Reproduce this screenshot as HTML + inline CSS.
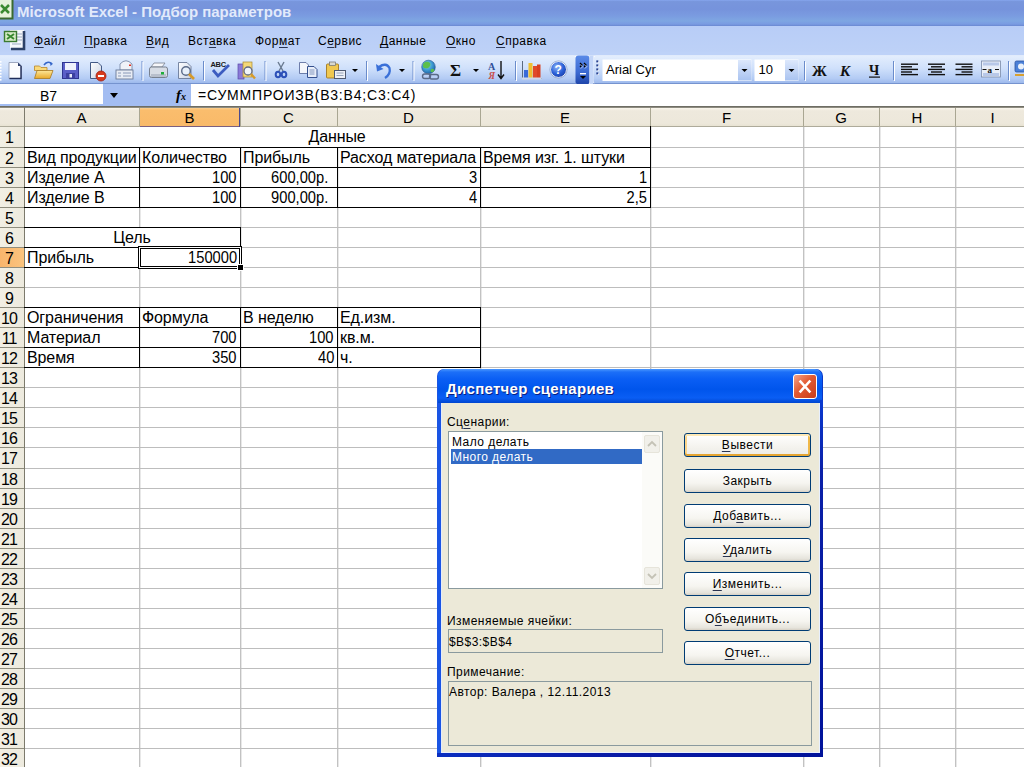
<!DOCTYPE html><html><head><meta charset="utf-8"><style>
*{margin:0;padding:0;box-sizing:border-box}
html,body{width:1024px;height:767px;overflow:hidden;background:#fff;font-family:"Liberation Sans",sans-serif;position:relative}
.a{position:absolute}
.t{position:absolute;white-space:nowrap;line-height:1}
u{text-decoration:underline;text-decoration-thickness:1px;text-underline-offset:2px;text-decoration-color:#2a3350}
</style></head><body>

<div class="a" style="left:0;top:0;width:1024px;height:26px;background:linear-gradient(#86a6ee 0%,#7896dc 6%,#7693dc 35%,#7a9be0 60%,#7ea6e2 80%,#7a9ce2 92%,#6d8cd6 100%)"></div>
<div class="a" style="left:0;top:25px;width:1024px;height:1px;background:#6e8dd5"></div>
<div class="t" style="left:17px;top:4px;font-size:15px;font-weight:bold;color:#e2eafb;letter-spacing:0px">Microsoft Excel - Подбор параметров</div>
<svg class="a" style="left:0;top:0" width="14" height="20"><rect x="-2" y="-2" width="14.5" height="20.5" fill="#e6f2da" stroke="#3a6a30" stroke-width="2"/><path d="M1 5 L9 13 M9 5 L1 13" stroke="#3a8a30" stroke-width="2.5"/></svg>
<div class="a" style="left:0;top:26px;width:1024px;height:26px;background:linear-gradient(#b8cdf7,#bdd1f7)"></div>
<div class="t" style="left:34px;top:35px;font-size:12px;color:#000;letter-spacing:0.5px"><u>Ф</u>айл</div>
<div class="t" style="left:84px;top:35px;font-size:12px;color:#000;letter-spacing:0.5px"><u>П</u>равка</div>
<div class="t" style="left:146px;top:35px;font-size:12px;color:#000;letter-spacing:0.5px"><u>В</u>ид</div>
<div class="t" style="left:188px;top:35px;font-size:12px;color:#000;letter-spacing:0.5px">Вст<u>а</u>вка</div>
<div class="t" style="left:255px;top:35px;font-size:12px;color:#000;letter-spacing:0.5px">Фор<u>м</u>ат</div>
<div class="t" style="left:318px;top:35px;font-size:12px;color:#000;letter-spacing:0.5px">С<u>е</u>рвис</div>
<div class="t" style="left:380px;top:35px;font-size:12px;color:#000;letter-spacing:0.5px"><u>Д</u>анные</div>
<div class="t" style="left:446px;top:35px;font-size:12px;color:#000;letter-spacing:0.5px"><u>О</u>кно</div>
<div class="t" style="left:496px;top:35px;font-size:12px;color:#000;letter-spacing:0.5px"><u>С</u>правка</div>
<svg class="a" style="left:3px;top:28px" width="24" height="24"><rect x="7" y="2" width="14" height="18" fill="#f6f8fc"/><path d="M21 3 V21 H8" stroke="#2d4168" stroke-width="2.6" fill="none"/><path d="M14 6 h5 M14 9 h5 M14 12 h5 M9 16 h9" stroke="#9aa8c0" stroke-width="1"/><rect x="1.5" y="3.5" width="12" height="10" fill="#d8ecc8" stroke="#3a7a30" stroke-width="1.4"/><path d="M4 6 L11 11 M11 6 L4 11" stroke="#3a8a30" stroke-width="2"/></svg>
<svg class="a" style="left:0;top:52px" width="1024" height="36" viewBox="0 52 1024 36">
<defs>
<linearGradient id="tb" x1="0" y1="0" x2="0" y2="1"><stop offset="0" stop-color="#e4eefd"/><stop offset="0.45" stop-color="#cfe0fb"/><stop offset="0.8" stop-color="#b3cbf4"/><stop offset="1" stop-color="#97b4ea"/></linearGradient>
<linearGradient id="chev" x1="0" y1="0" x2="0" y2="1"><stop offset="0" stop-color="#5a8ae8"/><stop offset="0.6" stop-color="#3a68d0"/><stop offset="1" stop-color="#1e44a8"/></linearGradient>
<linearGradient id="fold" x1="0" y1="0" x2="0" y2="1"><stop offset="0" stop-color="#fde79a"/><stop offset="1" stop-color="#e8a92a"/></linearGradient>
<linearGradient id="paper" x1="0" y1="0" x2="1" y2="1"><stop offset="0" stop-color="#ffffff"/><stop offset="1" stop-color="#c9d2e4"/></linearGradient>
<linearGradient id="combo" x1="0" y1="0" x2="0" y2="1"><stop offset="0" stop-color="#dde8fc"/><stop offset="1" stop-color="#a9c3f0"/></linearGradient>
<radialGradient id="help" cx="0.4" cy="0.35" r="0.7"><stop offset="0" stop-color="#8fb4f8"/><stop offset="0.6" stop-color="#2a5fd6"/><stop offset="1" stop-color="#1b3fa8"/></radialGradient>
<radialGradient id="globe" cx="0.4" cy="0.35" r="0.7"><stop offset="0" stop-color="#9fe0a0"/><stop offset="0.5" stop-color="#3f9fd8"/><stop offset="1" stop-color="#1f5fa0"/></radialGradient>
</defs>
<rect x="0" y="52" width="1024" height="3.5" fill="#bed2f8"/>
<rect x="0" y="84" width="1024" height="4" fill="#ffffff"/>
<path d="M0 55.5 H572 Q576 55.5 576 59 V84.3 H0 Z" fill="url(#tb)"/>
<rect x="575.5" y="55.5" width="14" height="29" rx="3" fill="url(#chev)"/>
<path d="M580 63 l2 2 -2 2 M584 63 l2 2 -2 2" stroke="#000" stroke-width="1.3" fill="none"/>
<path d="M580 63.8 l2 2 -2 2 M584 63.8 l2 2 -2 2" stroke="#fff" stroke-width="0.6" fill="none" transform="translate(0.8,0.8)"/>
<rect x="580" y="73" width="6" height="1.4" fill="#fff"/><path d="M580 76 h6 l-3 3 z" fill="#000"/>
<rect x="589.5" y="55.5" width="4" height="29" fill="#c4d6f8"/>
<path d="M597 55.5 H1024 V84.3 H597 Q593.5 84.3 593.5 80 V60 Q593.5 55.5 597 55.5 Z" fill="url(#tb)"/>
<rect x="0" y="83.3" width="576" height="1.2" fill="#6584c4"/><rect x="593" y="83.3" width="431" height="1.2" fill="#6584c4"/>
<rect x="0" y="61" width="1.5" height="1.6" fill="#fff"/>
<rect x="0" y="64" width="1.5" height="1.6" fill="#fff"/>
<rect x="0" y="67" width="1.5" height="1.6" fill="#fff"/>
<rect x="0" y="70" width="1.5" height="1.6" fill="#fff"/>
<rect x="0" y="73" width="1.5" height="1.6" fill="#fff"/>
<rect x="0" y="76" width="1.5" height="1.6" fill="#fff"/>
<rect x="0" y="79" width="1.5" height="1.6" fill="#fff"/>
<rect x="597" y="61" width="2" height="2" fill="#fff"/><rect x="596.3" y="60.4" width="2" height="2" fill="#27418f"/>
<rect x="597" y="65" width="2" height="2" fill="#fff"/><rect x="596.3" y="64.4" width="2" height="2" fill="#27418f"/>
<rect x="597" y="69" width="2" height="2" fill="#fff"/><rect x="596.3" y="68.4" width="2" height="2" fill="#27418f"/>
<rect x="597" y="73" width="2" height="2" fill="#fff"/><rect x="596.3" y="72.4" width="2" height="2" fill="#27418f"/>
<rect x="141.5" y="61" width="1" height="19" fill="#6a8ccb"/><rect x="142.5" y="62" width="1" height="19" fill="#ffffff"/>
<rect x="203" y="61" width="1" height="19" fill="#6a8ccb"/><rect x="204" y="62" width="1" height="19" fill="#ffffff"/>
<rect x="264.5" y="61" width="1" height="19" fill="#6a8ccb"/><rect x="265.5" y="62" width="1" height="19" fill="#ffffff"/>
<rect x="366" y="61" width="1" height="19" fill="#6a8ccb"/><rect x="367" y="62" width="1" height="19" fill="#ffffff"/>
<rect x="412.5" y="61" width="1" height="19" fill="#6a8ccb"/><rect x="413.5" y="62" width="1" height="19" fill="#ffffff"/>
<rect x="515" y="61" width="1" height="19" fill="#6a8ccb"/><rect x="516" y="62" width="1" height="19" fill="#ffffff"/>
<rect x="804" y="61" width="1" height="19" fill="#6a8ccb"/><rect x="805" y="62" width="1" height="19" fill="#ffffff"/>
<rect x="893" y="61" width="1" height="19" fill="#6a8ccb"/><rect x="894" y="62" width="1" height="19" fill="#ffffff"/>
<rect x="1008" y="61" width="1" height="19" fill="#6a8ccb"/><rect x="1009" y="62" width="1" height="19" fill="#ffffff"/>
<path d="M9 62.5 H18 L21.5 66 V78.5 H9 Z" fill="#fbfcfe" stroke="#8a96b0" stroke-width="0.8"/>
<path d="M21 66 V78.5 H9.5" stroke="#1e2c58" stroke-width="1.4" fill="none"/>
<path d="M18 62.5 L21.5 66 H18 Z" fill="#2a3a68"/>
<path d="M34.5 66 h5 l1.5 1.5 h6 v3 H34.5 z" fill="#f9d97a" stroke="#b7862a" stroke-width="0.8"/>
<path d="M34.5 78.5 L37 70.5 H53 L50 78.5 Z" fill="url(#fold)" stroke="#a8781e" stroke-width="0.8"/>
<path d="M44 65 Q47 60.5 51.5 63.5" stroke="#3566c8" stroke-width="1.6" fill="none"/><path d="M50 62 l3 1.8 -2.5 2.2z" fill="#3566c8"/>
<rect x="62.5" y="62.5" width="16" height="16" fill="#5a5fc8" stroke="#2e3590" stroke-width="1"/>
<rect x="65" y="63" width="11" height="7" fill="#eef1fb"/><rect x="66" y="73" width="9" height="5.5" fill="#3b40a0"/><rect x="69.5" y="74" width="2.5" height="3.5" fill="#e9ecf8"/>
<path d="M90.5 62.5 H98 L101.5 66 V78.5 H90.5 Z" fill="url(#paper)" stroke="#445a86" stroke-width="1"/>
<circle cx="101" cy="76" r="5" fill="#d83a1e" stroke="#a02010" stroke-width="0.8"/><rect x="98" y="75" width="6" height="2" fill="#fff"/>
<path d="M120 64 Q126 57.5 132 64 V70 H120 Z" fill="#f0f2f8" stroke="#7a8aa8" stroke-width="0.9"/>
<rect x="129" y="64.5" width="2" height="1.5" fill="#e03020"/>
<rect x="116" y="70" width="17" height="9" fill="#e8ecf4" stroke="#6a7a98" stroke-width="0.9"/>
<path d="M118 73 h3 M118 76 h3 M123 73 h8 M123 76 h8" stroke="#8090b0" stroke-width="0.9"/>
<path d="M151 67 L154 63 H165 L162 67 Z" fill="#f6f7fb" stroke="#7a8290" stroke-width="0.8"/>
<rect x="149.5" y="67" width="18" height="10.5" rx="2" fill="#d8dde6" stroke="#6e7684" stroke-width="0.9"/>
<rect x="151" y="74" width="15" height="3" fill="#b8bfcc"/><rect x="161" y="72" width="3" height="2.5" fill="#1fae3a"/>
<path d="M178.5 62.5 H187 L191 66.5 V78.5 H178.5 Z" fill="url(#paper)" stroke="#6b7a98" stroke-width="0.9"/>
<circle cx="186" cy="71" r="4.3" fill="#e8f0fb" stroke="#5a6a88" stroke-width="1.4"/>
<path d="M189 74 L194 79" stroke="#d69a2a" stroke-width="2.6"/>
<text x="210.5" y="66.5" font-family="Liberation Sans" font-weight="bold" font-size="7.5" fill="#1a1a1a" letter-spacing="-0.3">ABC</text>
<path d="M213 70 L218 76 L229 65" stroke="#3c5cc0" stroke-width="2.8" fill="none"/>
<rect x="238" y="64" width="6" height="15" fill="#8a7ad8" stroke="#5a4aa8" stroke-width="0.7"/>
<rect x="243" y="62" width="9" height="15" fill="#f4d878" stroke="#a88a30" stroke-width="0.7"/>
<circle cx="248" cy="71" r="4" fill="#f0f4fb" stroke="#606a80" stroke-width="1.3"/><path d="M251 74 L255 78.5" stroke="#d69a2a" stroke-width="2.4"/>
<path d="M278 62 L283 71 M284 62 L279 71" stroke="#6a7a90" stroke-width="1.4"/>
<ellipse cx="278" cy="74.5" rx="2.3" ry="2.8" fill="none" stroke="#2c50b8" stroke-width="2"/><ellipse cx="284" cy="74.5" rx="2.3" ry="2.8" fill="none" stroke="#2c50b8" stroke-width="2"/>
<path d="M299.5 62.5 H306 L308.5 65 V73.5 H299.5 Z" fill="#f4f6fb" stroke="#6070a0" stroke-width="0.9"/>
<path d="M307.5 66.5 H314 L317 69.5 V77.5 H307.5 Z" fill="#e8eef9" stroke="#34508e" stroke-width="1"/>
<path d="M309.5 70 h5 M309.5 72 h5 M309.5 74 h5" stroke="#6a80b0" stroke-width="0.8"/>
<rect x="326.5" y="64" width="12" height="14" rx="1" fill="#f0c850" stroke="#a07820" stroke-width="0.9"/>
<rect x="329.5" y="62" width="6" height="3.5" fill="#d8d8d0" stroke="#707070" stroke-width="0.7"/>
<rect x="334.5" y="70.5" width="11" height="8" fill="#eef0f6" stroke="#505a70" stroke-width="1"/>
<path d="M336.5 73 h7 M336.5 75.5 h7" stroke="#8090a8" stroke-width="0.8"/>
<path d="M352 69 h6 l-3 3 z" fill="#000"/>
<path d="M399 69 h6 l-3 3 z" fill="#000"/>
<path d="M473 69 h6 l-3 3 z" fill="#000"/>
<path d="M379 67 Q386 62 389.5 68 Q391 74 385 78" stroke="#3a70d8" stroke-width="2.3" fill="none"/>
<path d="M376 64 L377 71.5 L383.5 69 Z" fill="#3a70d8"/>
<circle cx="428.5" cy="67" r="6.8" fill="url(#globe)" stroke="#2a5a90" stroke-width="0.6"/>
<path d="M423 64 q3 -4 7 -1 q1 3 -2 5 q-3 1 -5 -1z M431 69 q3 -1 3.5 1.5 q-2 3 -4 1z" fill="#5cbf4a"/>
<rect x="422.5" y="74" width="8" height="4.5" rx="2.2" fill="none" stroke="#5a6a88" stroke-width="1.4"/><rect x="429.5" y="74.5" width="9" height="4.5" rx="2.2" fill="none" stroke="#5a6a88" stroke-width="1.4"/>
<text x="450" y="75.5" font-family="Liberation Serif" font-weight="bold" font-size="17" fill="#111">Σ</text>
<text x="488" y="69.5" font-family="Liberation Serif" font-weight="bold" font-size="10" fill="#2f4f98">A</text>
<text x="488.5" y="79" font-family="Liberation Serif" font-weight="bold" font-style="italic" font-size="9.5" fill="#c85050">Я</text>
<path d="M501 61 V78 M498 74.5 L501 78.5 L504 74.5" stroke="#111" stroke-width="1.4" fill="none"/>
<path d="M522.5 61 V78.5 H541.5" stroke="#5a6a80" stroke-width="1" fill="none"/>
<rect x="524" y="70" width="4" height="8" fill="#3a6ad8"/><rect x="528.5" y="63" width="4" height="15" fill="#f0c030"/><rect x="533" y="66" width="4" height="12" fill="#e04a2a"/><rect x="537" y="64.5" width="3.5" height="13.5" fill="#d84020"/>
<rect x="522" y="77.5" width="19.5" height="2" fill="#d0d8e8"/>
<circle cx="558.5" cy="69.5" r="8" fill="url(#help)" stroke="#fff" stroke-width="1"/><circle cx="558.5" cy="69.5" r="8.6" fill="none" stroke="#6a80b0" stroke-width="0.5"/>
<text x="554.5" y="74" font-family="Liberation Sans" font-weight="bold" font-size="12" fill="#fff">?</text>
<rect x="602.5" y="59.5" width="149" height="21.5" fill="#fff"/>
<rect x="738" y="60" width="13.5" height="20.5" fill="url(#combo)"/>
<path d="M741.5 69 h6 l-3 3 z" fill="#000"/>
<rect x="754.5" y="59.5" width="44" height="21.5" fill="#fff"/>
<rect x="785" y="60" width="13.5" height="20.5" fill="url(#combo)"/>
<path d="M788.5 69 h6 l-3 3 z" fill="#000"/>
<text x="606" y="73.5" font-family="Liberation Sans" font-size="13" fill="#000">Arial Cyr</text>
<text x="758.5" y="73.5" font-family="Liberation Sans" font-size="13" fill="#000">10</text>
<text x="812" y="75.5" font-family="Liberation Serif" font-weight="bold" font-size="15" fill="#111">Ж</text>
<text x="840" y="75.5" font-family="Liberation Serif" font-weight="bold" font-style="italic" font-size="15" fill="#111">К</text>
<text x="869" y="75" font-family="Liberation Serif" font-weight="bold" font-size="14" fill="#111">Ч</text>
<rect x="869" y="76.5" width="11" height="1.2" fill="#111"/>
<rect x="901" y="63.5" width="17" height="1.4" fill="#111"/>
<rect x="901" y="66.1" width="11" height="1.4" fill="#111"/>
<rect x="901" y="68.7" width="17" height="1.4" fill="#111"/>
<rect x="901" y="71.3" width="11" height="1.4" fill="#111"/>
<rect x="901" y="73.9" width="17" height="1.4" fill="#111"/>
<rect x="928" y="63.5" width="17" height="1.4" fill="#111"/>
<rect x="931" y="66.1" width="11" height="1.4" fill="#111"/>
<rect x="928" y="68.7" width="17" height="1.4" fill="#111"/>
<rect x="931" y="71.3" width="11" height="1.4" fill="#111"/>
<rect x="928" y="73.9" width="17" height="1.4" fill="#111"/>
<rect x="955.5" y="63.5" width="17" height="1.4" fill="#111"/>
<rect x="961.5" y="66.1" width="11" height="1.4" fill="#111"/>
<rect x="955.5" y="68.7" width="17" height="1.4" fill="#111"/>
<rect x="961.5" y="71.3" width="11" height="1.4" fill="#111"/>
<rect x="955.5" y="73.9" width="17" height="1.4" fill="#111"/>
<rect x="981.5" y="61" width="19" height="16" fill="#e8eef8" stroke="#7a8aa8" stroke-width="0.8"/>
<rect x="983" y="62.5" width="16" height="3" fill="#b8c8e8"/><rect x="983" y="73" width="16" height="3" fill="#b8c8e8"/>
<text x="987.5" y="72.5" font-family="Liberation Serif" font-weight="bold" font-size="9" fill="#111">a</text>
<path d="M982.5 69.5 h4 M995 69.5 h4" stroke="#111" stroke-width="1"/>
<rect x="1015" y="61" width="10" height="11" rx="1.5" fill="#4a80d8" stroke="#2a50a0" stroke-width="0.8"/><circle cx="1021" cy="66.5" r="3" fill="#e8f0fb"/>
<path d="M1015 75 h10" stroke="#d8a030" stroke-width="2"/>
</svg>
<div class="a" style="left:0;top:84px;width:1024px;height:22px;background:#a3bdf2"></div>
<div class="a" style="left:0;top:84px;width:103px;height:20px;background:#fff"></div>
<div class="a" style="left:191px;top:84px;width:833px;height:22px;background:#fff"></div>
<div class="t" style="left:40px;top:89px;font-size:14px;color:#000">B7</div>
<div class="a" style="left:110px;top:93px;width:0;height:0;border-left:4.5px solid transparent;border-right:4.5px solid transparent;border-top:5px solid #000"></div>
<div class="t" style="left:176px;top:88px;font-size:15px;font-style:italic;font-weight:bold;font-family:'Liberation Serif',serif;color:#000">f<span style="font-size:10px">x</span></div>
<div class="t" style="left:198px;top:88px;font-size:14px;color:#000;letter-spacing:0.8px">=СУММПРОИЗВ(B3:B4;C3:C4)</div>
<div class="a" style="left:0;top:106px;width:1024px;height:1px;background:#6e6d64"></div>
<div class="a" style="left:0;top:107px;width:1024px;height:1px;background:#8e8c80"></div>
<div class="a" style="left:0;top:108px;width:1024px;height:19px;background:linear-gradient(#faf6ec 0%,#eee9dd 15%,#ede8db 80%,#e6e1d0 100%)"></div>
<div class="a" style="left:140px;top:108px;width:100px;height:19px;background:linear-gradient(#fdd08f 0%,#fabd6d 12%,#f9ba69 92%,#f5b060 100%)"></div>
<div class="a" style="left:0;top:126px;width:1024px;height:1px;background:#aeab9b"></div>
<div class="a" style="left:140px;top:126px;width:100px;height:1px;background:#7b6080"></div>
<div class="a" style="left:239px;top:108px;width:1px;height:19px;background:#4a4a90"></div>
<div class="a" style="left:139px;top:108px;width:1px;height:18px;background:#a9a692"></div>
<div class="t" style="left:61.5px;width:40px;text-align:center;top:110px;font-size:15px;color:#000">A</div>
<div class="a" style="left:240px;top:108px;width:1px;height:18px;background:#a9a692"></div>
<div class="t" style="left:169.5px;width:40px;text-align:center;top:110px;font-size:15px;color:#000">B</div>
<div class="a" style="left:337px;top:108px;width:1px;height:18px;background:#a9a692"></div>
<div class="t" style="left:268.5px;width:40px;text-align:center;top:110px;font-size:15px;color:#000">C</div>
<div class="a" style="left:480px;top:108px;width:1px;height:18px;background:#a9a692"></div>
<div class="t" style="left:388.5px;width:40px;text-align:center;top:110px;font-size:15px;color:#000">D</div>
<div class="a" style="left:650px;top:108px;width:1px;height:18px;background:#a9a692"></div>
<div class="t" style="left:545.0px;width:40px;text-align:center;top:110px;font-size:15px;color:#000">E</div>
<div class="a" style="left:803px;top:108px;width:1px;height:18px;background:#a9a692"></div>
<div class="t" style="left:706.5px;width:40px;text-align:center;top:110px;font-size:15px;color:#000">F</div>
<div class="a" style="left:879px;top:108px;width:1px;height:18px;background:#a9a692"></div>
<div class="t" style="left:821.0px;width:40px;text-align:center;top:110px;font-size:15px;color:#000">G</div>
<div class="a" style="left:955px;top:108px;width:1px;height:18px;background:#a9a692"></div>
<div class="t" style="left:897.0px;width:40px;text-align:center;top:110px;font-size:15px;color:#000">H</div>
<div class="a" style="left:1030px;top:108px;width:1px;height:18px;background:#a9a692"></div>
<div class="t" style="left:972.5px;width:40px;text-align:center;top:110px;font-size:15px;color:#000">I</div>
<div class="a" style="left:0;top:127px;width:24px;height:640px;background:linear-gradient(90deg,#f2efe4,#edeade)"></div>
<div class="a" style="left:24px;top:107px;width:1px;height:660px;background:#7c7a6c"></div>
<div class="a" style="left:0;top:147px;width:24px;height:1px;background:#8f8d7e"></div>
<div class="t" style="left:-1px;width:20px;text-align:center;top:130px;font-size:16px;letter-spacing:-1px;color:#000">1</div>
<div class="a" style="left:0;top:167px;width:24px;height:1px;background:#8f8d7e"></div>
<div class="t" style="left:-1px;width:20px;text-align:center;top:151px;font-size:16px;letter-spacing:-1px;color:#000">2</div>
<div class="a" style="left:0;top:187px;width:24px;height:1px;background:#8f8d7e"></div>
<div class="t" style="left:-1px;width:20px;text-align:center;top:171px;font-size:16px;letter-spacing:-1px;color:#000">3</div>
<div class="a" style="left:0;top:207px;width:24px;height:1px;background:#8f8d7e"></div>
<div class="t" style="left:-1px;width:20px;text-align:center;top:191px;font-size:16px;letter-spacing:-1px;color:#000">4</div>
<div class="a" style="left:0;top:227px;width:24px;height:1px;background:#8f8d7e"></div>
<div class="t" style="left:-1px;width:20px;text-align:center;top:211px;font-size:16px;letter-spacing:-1px;color:#000">5</div>
<div class="a" style="left:0;top:247px;width:24px;height:1px;background:#8f8d7e"></div>
<div class="t" style="left:-1px;width:20px;text-align:center;top:231px;font-size:16px;letter-spacing:-1px;color:#000">6</div>
<div class="a" style="left:0;top:248px;width:24px;height:19px;background:linear-gradient(90deg,#f9b56c,#fbc47e)"></div>
<div class="a" style="left:0;top:267px;width:24px;height:1px;background:#8f8d7e"></div>
<div class="t" style="left:-1px;width:20px;text-align:center;top:251px;font-size:16px;letter-spacing:-1px;color:#000">7</div>
<div class="a" style="left:0;top:287px;width:24px;height:1px;background:#8f8d7e"></div>
<div class="t" style="left:-1px;width:20px;text-align:center;top:271px;font-size:16px;letter-spacing:-1px;color:#000">8</div>
<div class="a" style="left:0;top:307px;width:24px;height:1px;background:#8f8d7e"></div>
<div class="t" style="left:-1px;width:20px;text-align:center;top:291px;font-size:16px;letter-spacing:-1px;color:#000">9</div>
<div class="a" style="left:0;top:327px;width:24px;height:1px;background:#8f8d7e"></div>
<div class="t" style="left:-1px;width:20px;text-align:center;top:311px;font-size:16px;letter-spacing:-1px;color:#000">10</div>
<div class="a" style="left:0;top:347px;width:24px;height:1px;background:#8f8d7e"></div>
<div class="t" style="left:-1px;width:20px;text-align:center;top:331px;font-size:16px;letter-spacing:-1px;color:#000">11</div>
<div class="a" style="left:0;top:367px;width:24px;height:1px;background:#8f8d7e"></div>
<div class="t" style="left:-1px;width:20px;text-align:center;top:351px;font-size:16px;letter-spacing:-1px;color:#000">12</div>
<div class="a" style="left:0;top:387px;width:24px;height:1px;background:#8f8d7e"></div>
<div class="t" style="left:-1px;width:20px;text-align:center;top:371px;font-size:16px;letter-spacing:-1px;color:#000">13</div>
<div class="a" style="left:0;top:407px;width:24px;height:1px;background:#8f8d7e"></div>
<div class="t" style="left:-1px;width:20px;text-align:center;top:391px;font-size:16px;letter-spacing:-1px;color:#000">14</div>
<div class="a" style="left:0;top:427px;width:24px;height:1px;background:#8f8d7e"></div>
<div class="t" style="left:-1px;width:20px;text-align:center;top:411px;font-size:16px;letter-spacing:-1px;color:#000">15</div>
<div class="a" style="left:0;top:447px;width:24px;height:1px;background:#8f8d7e"></div>
<div class="t" style="left:-1px;width:20px;text-align:center;top:431px;font-size:16px;letter-spacing:-1px;color:#000">16</div>
<div class="a" style="left:0;top:468px;width:24px;height:1px;background:#8f8d7e"></div>
<div class="t" style="left:-1px;width:20px;text-align:center;top:451px;font-size:16px;letter-spacing:-1px;color:#000">17</div>
<div class="a" style="left:0;top:488px;width:24px;height:1px;background:#8f8d7e"></div>
<div class="t" style="left:-1px;width:20px;text-align:center;top:472px;font-size:16px;letter-spacing:-1px;color:#000">18</div>
<div class="a" style="left:0;top:508px;width:24px;height:1px;background:#8f8d7e"></div>
<div class="t" style="left:-1px;width:20px;text-align:center;top:492px;font-size:16px;letter-spacing:-1px;color:#000">19</div>
<div class="a" style="left:0;top:528px;width:24px;height:1px;background:#8f8d7e"></div>
<div class="t" style="left:-1px;width:20px;text-align:center;top:512px;font-size:16px;letter-spacing:-1px;color:#000">20</div>
<div class="a" style="left:0;top:548px;width:24px;height:1px;background:#8f8d7e"></div>
<div class="t" style="left:-1px;width:20px;text-align:center;top:532px;font-size:16px;letter-spacing:-1px;color:#000">21</div>
<div class="a" style="left:0;top:568px;width:24px;height:1px;background:#8f8d7e"></div>
<div class="t" style="left:-1px;width:20px;text-align:center;top:552px;font-size:16px;letter-spacing:-1px;color:#000">22</div>
<div class="a" style="left:0;top:588px;width:24px;height:1px;background:#8f8d7e"></div>
<div class="t" style="left:-1px;width:20px;text-align:center;top:572px;font-size:16px;letter-spacing:-1px;color:#000">23</div>
<div class="a" style="left:0;top:608px;width:24px;height:1px;background:#8f8d7e"></div>
<div class="t" style="left:-1px;width:20px;text-align:center;top:592px;font-size:16px;letter-spacing:-1px;color:#000">24</div>
<div class="a" style="left:0;top:628px;width:24px;height:1px;background:#8f8d7e"></div>
<div class="t" style="left:-1px;width:20px;text-align:center;top:612px;font-size:16px;letter-spacing:-1px;color:#000">25</div>
<div class="a" style="left:0;top:648px;width:24px;height:1px;background:#8f8d7e"></div>
<div class="t" style="left:-1px;width:20px;text-align:center;top:632px;font-size:16px;letter-spacing:-1px;color:#000">26</div>
<div class="a" style="left:0;top:668px;width:24px;height:1px;background:#8f8d7e"></div>
<div class="t" style="left:-1px;width:20px;text-align:center;top:652px;font-size:16px;letter-spacing:-1px;color:#000">27</div>
<div class="a" style="left:0;top:688px;width:24px;height:1px;background:#8f8d7e"></div>
<div class="t" style="left:-1px;width:20px;text-align:center;top:672px;font-size:16px;letter-spacing:-1px;color:#000">28</div>
<div class="a" style="left:0;top:708px;width:24px;height:1px;background:#8f8d7e"></div>
<div class="t" style="left:-1px;width:20px;text-align:center;top:692px;font-size:16px;letter-spacing:-1px;color:#000">29</div>
<div class="a" style="left:0;top:728px;width:24px;height:1px;background:#8f8d7e"></div>
<div class="t" style="left:-1px;width:20px;text-align:center;top:712px;font-size:16px;letter-spacing:-1px;color:#000">30</div>
<div class="a" style="left:0;top:748px;width:24px;height:1px;background:#8f8d7e"></div>
<div class="t" style="left:-1px;width:20px;text-align:center;top:732px;font-size:16px;letter-spacing:-1px;color:#000">31</div>
<div class="a" style="left:0;top:768px;width:24px;height:1px;background:#8f8d7e"></div>
<div class="t" style="left:-1px;width:20px;text-align:center;top:752px;font-size:16px;letter-spacing:-1px;color:#000">32</div>
<div class="a" style="left:0;top:788px;width:24px;height:1px;background:#8f8d7e"></div>
<div class="t" style="left:-1px;width:20px;text-align:center;top:772px;font-size:16px;letter-spacing:-1px;color:#000">33</div>
<div class="a" style="left:139px;top:127px;width:1px;height:640px;background:#c2c2c2"></div>
<div class="a" style="left:140px;top:127px;width:1px;height:640px;background:#e8e8e8"></div>
<div class="a" style="left:240px;top:127px;width:1px;height:640px;background:#c2c2c2"></div>
<div class="a" style="left:241px;top:127px;width:1px;height:640px;background:#e8e8e8"></div>
<div class="a" style="left:337px;top:127px;width:1px;height:640px;background:#c2c2c2"></div>
<div class="a" style="left:338px;top:127px;width:1px;height:640px;background:#e8e8e8"></div>
<div class="a" style="left:480px;top:127px;width:1px;height:640px;background:#c2c2c2"></div>
<div class="a" style="left:481px;top:127px;width:1px;height:640px;background:#e8e8e8"></div>
<div class="a" style="left:650px;top:127px;width:1px;height:640px;background:#c2c2c2"></div>
<div class="a" style="left:651px;top:127px;width:1px;height:640px;background:#e8e8e8"></div>
<div class="a" style="left:803px;top:127px;width:1px;height:640px;background:#c2c2c2"></div>
<div class="a" style="left:804px;top:127px;width:1px;height:640px;background:#e8e8e8"></div>
<div class="a" style="left:879px;top:127px;width:1px;height:640px;background:#c2c2c2"></div>
<div class="a" style="left:880px;top:127px;width:1px;height:640px;background:#e8e8e8"></div>
<div class="a" style="left:955px;top:127px;width:1px;height:640px;background:#c2c2c2"></div>
<div class="a" style="left:956px;top:127px;width:1px;height:640px;background:#e8e8e8"></div>
<div class="a" style="left:25px;top:147px;width:999px;height:1px;background:#bdbdbd"></div>
<div class="a" style="left:25px;top:167px;width:999px;height:1px;background:#bdbdbd"></div>
<div class="a" style="left:25px;top:187px;width:999px;height:1px;background:#bdbdbd"></div>
<div class="a" style="left:25px;top:207px;width:999px;height:1px;background:#bdbdbd"></div>
<div class="a" style="left:25px;top:227px;width:999px;height:1px;background:#bdbdbd"></div>
<div class="a" style="left:25px;top:247px;width:999px;height:1px;background:#bdbdbd"></div>
<div class="a" style="left:25px;top:267px;width:999px;height:1px;background:#bdbdbd"></div>
<div class="a" style="left:25px;top:287px;width:999px;height:1px;background:#bdbdbd"></div>
<div class="a" style="left:25px;top:307px;width:999px;height:1px;background:#bdbdbd"></div>
<div class="a" style="left:25px;top:327px;width:999px;height:1px;background:#bdbdbd"></div>
<div class="a" style="left:25px;top:347px;width:999px;height:1px;background:#bdbdbd"></div>
<div class="a" style="left:25px;top:367px;width:999px;height:1px;background:#bdbdbd"></div>
<div class="a" style="left:25px;top:387px;width:999px;height:1px;background:#bdbdbd"></div>
<div class="a" style="left:25px;top:407px;width:999px;height:1px;background:#bdbdbd"></div>
<div class="a" style="left:25px;top:427px;width:999px;height:1px;background:#bdbdbd"></div>
<div class="a" style="left:25px;top:447px;width:999px;height:1px;background:#bdbdbd"></div>
<div class="a" style="left:25px;top:468px;width:999px;height:1px;background:#bdbdbd"></div>
<div class="a" style="left:25px;top:488px;width:999px;height:1px;background:#bdbdbd"></div>
<div class="a" style="left:25px;top:508px;width:999px;height:1px;background:#bdbdbd"></div>
<div class="a" style="left:25px;top:528px;width:999px;height:1px;background:#bdbdbd"></div>
<div class="a" style="left:25px;top:548px;width:999px;height:1px;background:#bdbdbd"></div>
<div class="a" style="left:25px;top:568px;width:999px;height:1px;background:#bdbdbd"></div>
<div class="a" style="left:25px;top:588px;width:999px;height:1px;background:#bdbdbd"></div>
<div class="a" style="left:25px;top:608px;width:999px;height:1px;background:#bdbdbd"></div>
<div class="a" style="left:25px;top:628px;width:999px;height:1px;background:#bdbdbd"></div>
<div class="a" style="left:25px;top:648px;width:999px;height:1px;background:#bdbdbd"></div>
<div class="a" style="left:25px;top:668px;width:999px;height:1px;background:#bdbdbd"></div>
<div class="a" style="left:25px;top:688px;width:999px;height:1px;background:#bdbdbd"></div>
<div class="a" style="left:25px;top:708px;width:999px;height:1px;background:#bdbdbd"></div>
<div class="a" style="left:25px;top:728px;width:999px;height:1px;background:#bdbdbd"></div>
<div class="a" style="left:25px;top:748px;width:999px;height:1px;background:#bdbdbd"></div>
<div class="a" style="left:25px;top:768px;width:999px;height:1px;background:#bdbdbd"></div>
<div class="a" style="left:25px;top:788px;width:999px;height:1px;background:#bdbdbd"></div>
<div class="a" style="left:25px;top:127px;width:625px;height:20px;background:#fff"></div>
<div class="a" style="left:25px;top:228px;width:215px;height:19px;background:#fff"></div>
<div class="a" style="left:24px;top:147px;width:627px;height:1px;background:#000"></div>
<div class="a" style="left:24px;top:167px;width:627px;height:1px;background:#000"></div>
<div class="a" style="left:24px;top:187px;width:627px;height:1px;background:#000"></div>
<div class="a" style="left:24px;top:207px;width:627px;height:1px;background:#000"></div>
<div class="a" style="left:139px;top:147px;width:1px;height:61px;background:#000"></div>
<div class="a" style="left:240px;top:147px;width:1px;height:61px;background:#000"></div>
<div class="a" style="left:337px;top:147px;width:1px;height:61px;background:#000"></div>
<div class="a" style="left:480px;top:147px;width:1px;height:61px;background:#000"></div>
<div class="a" style="left:650px;top:147px;width:1px;height:61px;background:#000"></div>
<div class="a" style="left:650px;top:126px;width:1px;height:82px;background:#000"></div>
<div class="a" style="left:24px;top:227px;width:217px;height:1px;background:#000"></div>
<div class="a" style="left:24px;top:247px;width:217px;height:1px;background:#000"></div>
<div class="a" style="left:24px;top:267px;width:217px;height:1px;background:#000"></div>
<div class="a" style="left:240px;top:227px;width:1px;height:41px;background:#000"></div>
<div class="a" style="left:139px;top:247px;width:1px;height:21px;background:#000"></div>
<div class="a" style="left:24px;top:307px;width:457px;height:1px;background:#000"></div>
<div class="a" style="left:24px;top:327px;width:457px;height:1px;background:#000"></div>
<div class="a" style="left:24px;top:347px;width:457px;height:1px;background:#000"></div>
<div class="a" style="left:24px;top:367px;width:457px;height:1px;background:#000"></div>
<div class="a" style="left:139px;top:307px;width:1px;height:61px;background:#000"></div>
<div class="a" style="left:240px;top:307px;width:1px;height:61px;background:#000"></div>
<div class="a" style="left:337px;top:307px;width:1px;height:61px;background:#000"></div>
<div class="a" style="left:480px;top:307px;width:1px;height:61px;background:#000"></div>
<div class="t" style="left:24px;width:626px;text-align:center;top:128.5px;font-size:16px;letter-spacing:-0.1px;color:#000">Данные</div>
<div class="t" style="left:27px;top:149.5px;font-size:16px;letter-spacing:-0.1px;color:#000;">Вид продукции</div>
<div class="t" style="left:142px;top:149.5px;font-size:16px;letter-spacing:-0.1px;color:#000;">Количество</div>
<div class="t" style="left:243px;top:149.5px;font-size:16px;letter-spacing:-0.1px;color:#000;">Прибыль</div>
<div class="t" style="left:340px;top:149.5px;font-size:16px;letter-spacing:-0.1px;color:#000;">Расход материала</div>
<div class="t" style="left:483px;top:149.5px;font-size:16px;letter-spacing:-0.1px;color:#000;">Время изг. 1. штуки</div>
<div class="t" style="left:27px;top:169.5px;font-size:16px;letter-spacing:-0.1px;color:#000;">Изделие А</div>
<div class="t" style="right:787px;top:169px;font-size:16.5px;transform:scaleX(0.89);transform-origin:100% 50%;color:#000;">100</div>
<div class="t" style="right:690px;top:169px;font-size:16.5px;transform:scaleX(0.89);transform-origin:100% 50%;color:#000;margin-right:6px">600,00р.</div>
<div class="t" style="right:547px;top:169px;font-size:16.5px;transform:scaleX(0.89);transform-origin:100% 50%;color:#000;">3</div>
<div class="t" style="right:377px;top:169px;font-size:16.5px;transform:scaleX(0.89);transform-origin:100% 50%;color:#000;">1</div>
<div class="t" style="left:27px;top:189.5px;font-size:16px;letter-spacing:-0.1px;color:#000;">Изделие В</div>
<div class="t" style="right:787px;top:189px;font-size:16.5px;transform:scaleX(0.89);transform-origin:100% 50%;color:#000;">100</div>
<div class="t" style="right:690px;top:189px;font-size:16.5px;transform:scaleX(0.89);transform-origin:100% 50%;color:#000;margin-right:6px">900,00р.</div>
<div class="t" style="right:547px;top:189px;font-size:16.5px;transform:scaleX(0.89);transform-origin:100% 50%;color:#000;">4</div>
<div class="t" style="right:377px;top:189px;font-size:16.5px;transform:scaleX(0.89);transform-origin:100% 50%;color:#000;">2,5</div>
<div class="t" style="left:24px;width:216px;text-align:center;top:229.5px;font-size:16px;letter-spacing:-0.1px;color:#000">Цель</div>
<div class="t" style="left:27px;top:249.5px;font-size:16px;letter-spacing:-0.1px;color:#000;">Прибыль</div>
<div class="t" style="right:787px;top:249px;font-size:16.5px;transform:scaleX(0.89);transform-origin:100% 50%;color:#000;">150000</div>
<div class="t" style="left:27px;top:309.5px;font-size:16px;letter-spacing:-0.1px;color:#000;">Ограничения</div>
<div class="t" style="left:142px;top:309.5px;font-size:16px;letter-spacing:-0.1px;color:#000;">Формула</div>
<div class="t" style="left:243px;top:309.5px;font-size:16px;letter-spacing:-0.1px;color:#000;">В неделю</div>
<div class="t" style="left:340px;top:309.5px;font-size:16px;letter-spacing:-0.1px;color:#000;">Ед.изм.</div>
<div class="t" style="left:27px;top:329.5px;font-size:16px;letter-spacing:-0.1px;color:#000;">Материал</div>
<div class="t" style="right:787px;top:329px;font-size:16.5px;transform:scaleX(0.89);transform-origin:100% 50%;color:#000;">700</div>
<div class="t" style="right:690px;top:329px;font-size:16.5px;transform:scaleX(0.89);transform-origin:100% 50%;color:#000;">100</div>
<div class="t" style="left:340px;top:329.5px;font-size:16px;letter-spacing:-0.1px;color:#000;">кв.м.</div>
<div class="t" style="left:27px;top:349.5px;font-size:16px;letter-spacing:-0.1px;color:#000;">Время</div>
<div class="t" style="right:787px;top:349px;font-size:16.5px;transform:scaleX(0.89);transform-origin:100% 50%;color:#000;">350</div>
<div class="t" style="right:690px;top:349px;font-size:16.5px;transform:scaleX(0.89);transform-origin:100% 50%;color:#000;">40</div>
<div class="t" style="left:340px;top:349.5px;font-size:16px;letter-spacing:-0.1px;color:#000;">ч.</div>
<div class="a" style="left:138px;top:246px;width:104px;height:23px;border:1px solid #000"></div>
<div class="a" style="left:139px;top:247px;width:102px;height:21px;border:1px solid #fff"></div>
<div class="a" style="left:140px;top:248px;width:100px;height:19px;border:1px solid #000"></div>
<div class="a" style="left:237px;top:264px;width:7px;height:7px;background:#000;border:1px solid #fff"></div>
<div class="a" style="left:437px;top:369px;width:386px;height:388px;background:linear-gradient(90deg,#1a55e4,#0a46d8 50%,#0838c8);border-radius:7px 7px 0 0"></div>
<div class="a" style="left:438px;top:369px;width:384px;height:34px;border-radius:7px 7px 0 0;background:linear-gradient(#4a98ff 0%,#1c6ff8 9%,#0a5ef4 30%,#0055ec 60%,#0a5ef4 85%,#0046d0 100%)"></div>
<div class="a" style="left:820px;top:400px;width:3px;height:357px;background:linear-gradient(#0a3ad0,#0a20a8 20%,#00129a)"></div>
<div class="a" style="left:437px;top:753px;width:386px;height:4px;background:linear-gradient(90deg,#0a2ec0,#0a1ca8 40%,#00129a)"></div>
<div class="a" style="left:441px;top:403px;width:379px;height:350px;background:#ece9d8;border-left:1px solid #e4ecfa;border-right:1px solid #e8f0ff;border-bottom:1px solid #e8f0ff"></div>
<div class="t" style="left:447px;top:382px;font-size:15px;font-weight:bold;color:#0a1e80;letter-spacing:0.3px">Диспетчер сценариев</div>
<div class="t" style="left:446px;top:381px;font-size:15px;font-weight:bold;color:#fff;letter-spacing:0.3px">Диспетчер сценариев</div>
<div class="a" style="left:793px;top:374px;width:24px;height:25px;border-radius:3px;border:1px solid #fff;background:linear-gradient(135deg,#f5a48a,#e25a32 45%,#c83c1a)"></div>
<svg class="a" style="left:793px;top:374px" width="24" height="25"><path d="M7.5 7.5 L16.5 17.5 M16.5 7.5 L7.5 17.5" stroke="#fff" stroke-width="2.6" stroke-linecap="square"/></svg>
<div class="t" style="left:447px;top:416px;font-size:12px;color:#000;letter-spacing:0.45px">Сц<u>е</u>нарии:</div>
<div class="a" style="left:448px;top:431px;width:215px;height:158px;background:#fff;border:1px solid #8a9a9e"></div>
<div class="a" style="left:451px;top:449px;width:191px;height:15px;background:#316ac5"></div>
<div class="t" style="left:452px;top:436px;font-size:12px;color:#000;letter-spacing:0.45px">Мало делать</div>
<div class="t" style="left:452px;top:451px;font-size:12px;color:#fff;letter-spacing:0.45px">Много делать</div>
<div class="a" style="left:642px;top:432px;width:20px;height:156px;background:#fbfbf8"></div>
<div class="a" style="left:644px;top:435px;width:16px;height:18px;background:#f1f0ea;border:1px solid #e6e4da;border-radius:2px"></div>
<svg class="a" style="left:644px;top:435px" width="16" height="18"><path d="M4 11 L8 7 L12 11" stroke="#c4c2b6" stroke-width="1.8" fill="none"/></svg>
<div class="a" style="left:644px;top:567px;width:16px;height:18px;background:#f1f0ea;border:1px solid #e6e4da;border-radius:2px"></div>
<svg class="a" style="left:644px;top:567px" width="16" height="18"><path d="M4 7 L8 11 L12 7" stroke="#c4c2b6" stroke-width="1.8" fill="none"/></svg>
<div class="a" style="left:684px;top:433px;width:127px;height:24px;border:1px solid #003c74;border-radius:3px;background:linear-gradient(#fff,#f4f3ee 60%,#ecebe6);box-shadow:inset 0 2px 0 #fee9b6,inset 0 -2px 0 #e5a532,inset 2px 0 0 #fbd58b,inset -2px 0 0 #f0b848"></div>
<div class="t" style="left:684px;width:127px;text-align:center;top:439px;font-size:12px;color:#000;letter-spacing:0.5px"><u>В</u>ывести</div>
<div class="a" style="left:684px;top:469px;width:127px;height:24px;border:1px solid #003c74;border-radius:3px;background:linear-gradient(#fff,#f6f5f0 60%,#e6e4dc 90%,#d6d0c5)"></div>
<div class="t" style="left:684px;width:127px;text-align:center;top:475px;font-size:12px;color:#000;letter-spacing:0.5px">Закрыть</div>
<div class="a" style="left:684px;top:504px;width:127px;height:24px;border:1px solid #003c74;border-radius:3px;background:linear-gradient(#fff,#f6f5f0 60%,#e6e4dc 90%,#d6d0c5)"></div>
<div class="t" style="left:684px;width:127px;text-align:center;top:510px;font-size:12px;color:#000;letter-spacing:0.5px">Доб<u>а</u>вить...</div>
<div class="a" style="left:684px;top:538px;width:127px;height:24px;border:1px solid #003c74;border-radius:3px;background:linear-gradient(#fff,#f6f5f0 60%,#e6e4dc 90%,#d6d0c5)"></div>
<div class="t" style="left:684px;width:127px;text-align:center;top:544px;font-size:12px;color:#000;letter-spacing:0.5px"><u>У</u>далить</div>
<div class="a" style="left:684px;top:572px;width:127px;height:24px;border:1px solid #003c74;border-radius:3px;background:linear-gradient(#fff,#f6f5f0 60%,#e6e4dc 90%,#d6d0c5)"></div>
<div class="t" style="left:684px;width:127px;text-align:center;top:578px;font-size:12px;color:#000;letter-spacing:0.5px"><u>И</u>зменить...</div>
<div class="a" style="left:684px;top:607px;width:127px;height:24px;border:1px solid #003c74;border-radius:3px;background:linear-gradient(#fff,#f6f5f0 60%,#e6e4dc 90%,#d6d0c5)"></div>
<div class="t" style="left:684px;width:127px;text-align:center;top:613px;font-size:12px;color:#000;letter-spacing:0.5px">О<u>б</u>ъединить...</div>
<div class="a" style="left:684px;top:641px;width:127px;height:24px;border:1px solid #003c74;border-radius:3px;background:linear-gradient(#fff,#f6f5f0 60%,#e6e4dc 90%,#d6d0c5)"></div>
<div class="t" style="left:684px;width:127px;text-align:center;top:647px;font-size:12px;color:#000;letter-spacing:0.5px"><u>О</u>тчет...</div>
<div class="t" style="left:447px;top:615px;font-size:12px;color:#000;letter-spacing:0.45px">Изменяемые ячейки:</div>
<div class="a" style="left:448px;top:629px;width:215px;height:24px;background:#ece9d8;border:1px solid #8a9a9e"></div>
<div class="t" style="left:449px;top:636px;font-size:12px;color:#000;letter-spacing:0.45px">$B$3:$B$4</div>
<div class="t" style="left:447px;top:666px;font-size:12px;color:#000;letter-spacing:0.45px">Примечание:</div>
<div class="a" style="left:448px;top:681px;width:364px;height:65px;background:#ece9d8;border:1px solid #8a9a9e"></div>
<div class="t" style="left:449px;top:686px;font-size:12px;color:#000;letter-spacing:0.45px">Автор: Валера , 12.11.2013</div>
</body></html>
